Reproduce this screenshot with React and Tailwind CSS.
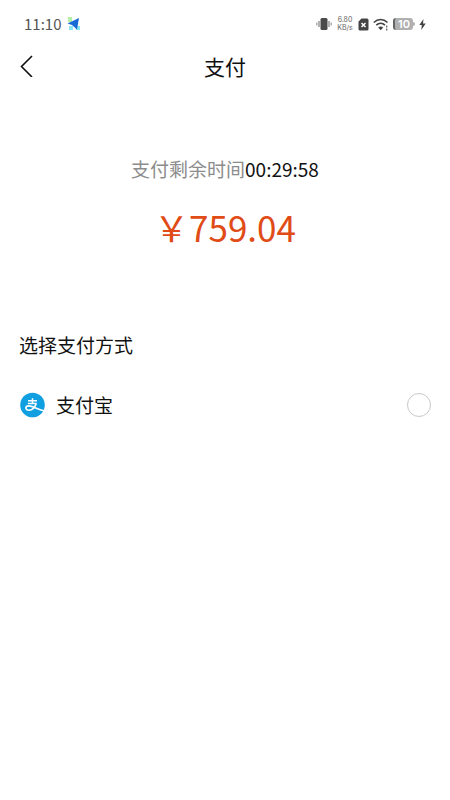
import React from "react";

function LocationArrow() {
  return (
    <svg width="14" height="14" viewBox="0 0 14 14" aria-hidden="true">
      <path d="M1 0h4v5H1z" fill="#b4efa8" />
      <path d="M2 9h4v4H2zM9 9h4v4H9z" fill="#8ce6f3" />
      <path d="M12 1 .5 6.5 5 8l5 4.500z" fill="#1769d6" />
    </svg>
  );
}

function VibrateIcon() {
  return (
    <svg width="16" height="14" viewBox="0 0 16 14" aria-hidden="true">
      <rect x="4.5" y="1" width="7" height="12" rx="1.5" fill="#4a4a4a" />
      <path d="M3 4v6M13 4v6" stroke="#888" strokeWidth="1.3" />
      <path d="M.8 5.5v3M15.2 5.5v3" stroke="#999" strokeWidth="1.2" />
    </svg>
  );
}

function SimIcon() {
  return (
    <svg width="11" height="13" viewBox="0 0 11 13" aria-hidden="true">
      <path d="M3.5.5H9A1.5 1.5 0 0 1 10.5 2v9A1.5 1.5 0 0 1 9 12.5H2A1.5 1.5 0 0 1 .5 11V3.5z" fill="#444" />
      <path d="m3.5 5 4 4m0-4-4 4" stroke="#fff" strokeWidth="1.5" />
    </svg>
  );
}

function WifiIcon() {
  return (
    <svg width="16" height="13" viewBox="0 0 16 13" fill="none" aria-hidden="true">
      <path d="M.8 4.5c4-4 9.700-4 13.700 0" stroke="#444" strokeWidth="1.6" />
      <path d="M3.3 7.2c2.600-2.500 6.100-2.500 8.700 0" stroke="#444" strokeWidth="1.6" />
      <path d="M5.200 9.600c1.500-1.500 3.500-1.500 5 0L7.700 12.200z" fill="#444" />
      <path d="M13.700 7.500v2M13.700 10.500v2" stroke="#666" strokeWidth="1.3" />
    </svg>
  );
}

function Battery() {
  return (
    <div className="flex items-center">
      <div className="flex h-3 w-5 items-center justify-center rounded-[3px] border-l-2 border-[#666] bg-[#b0b0b0] font-['Inter',sans-serif] text-[11px] leading-3 font-semibold text-white">
        10
      </div>
      <div className="h-1 w-0.5 rounded-r bg-[#b0b0b0]" />
    </div>
  );
}

function BoltIcon() {
  return (
    <svg width="7" height="11" viewBox="0 0 7 11" aria-hidden="true">
      <path d="M4.500 0 .3 6h2.500L2.300 11 6.700 4.500H4z" fill="#444" />
    </svg>
  );
}

function StatusBar() {
  return (
    <div className="flex h-12 items-center justify-between px-6 text-[#555]">
      <div className="flex items-center gap-1.5">
        <span className="text-[15px] leading-5">11:10</span>
        <LocationArrow />
      </div>
      <div className="flex items-center gap-1">
        <VibrateIcon />
        <div className="flex w-[18px] flex-col items-center font-['Inter',sans-serif] text-[7px] leading-2 text-[#666]">
          <span>6.80</span>
          <span>KB/s</span>
        </div>
        <SimIcon />
        <WifiIcon />
        <Battery />
        <BoltIcon />
      </div>
    </div>
  );
}

function AlipayLogo() {
  return (
    <svg width="26" height="26" viewBox="0 0 26 26" fill="none" aria-hidden="true">
      <circle cx="13.500" cy="13" r="12.300" fill="#109fe0" />
      <path d="M9 8.800h9M13.500 6.300v5.200M8.800 11.600h8.800" stroke="#fff" strokeWidth="1.5" />
      <path d="M17.200 11.600c-1 3.200-3.500 6.600-7.200 6.600-1.900 0-3.100-.8-3.100-2.100 0-1.400 1.300-2.200 2.900-2.200 3.700 0 8 3 15 4.800" stroke="#fff" strokeWidth="1.6" />
    </svg>
  );
}

export default function App() {
  return (
    <div className="min-h-screen bg-white font-['Noto_Sans_CJK_SC',sans-serif] text-[#111]">
      <StatusBar />
      <header className="grid h-9 grid-cols-[1fr_auto_1fr] items-center px-5">
        <button type="button" aria-label="返回" className="flex h-9 w-6 items-center">
          <svg width="13" height="22" viewBox="0 0 13 22" fill="none" aria-hidden="true">
            <path d="M12 1 1.500 11.500 12 22" stroke="#111" strokeWidth="1.6" />
          </svg>
        </button>
        <h1 className="text-[21px] leading-8">支付</h1>
      </header>
      <main>
        <section className="flex flex-col items-center pt-[71px]">
          <p className="text-[19px] leading-7">
            <span className="text-[#8c8c8c]">支付剩余时间</span>
            <time>00:29:58</time>
          </p>
          <p className="mt-5 text-[35px] leading-12 text-[#e04b16]">￥759.04</p>
        </section>
        <fieldset className="px-[19px] pt-20">
          <legend className="contents text-[19px] leading-7">选择支付方式</legend>
          <label className="mt-8 flex items-center text-[19px] leading-7">
            <AlipayLogo />
            <span className="ml-[11px] flex-1">支付宝</span>
            <input
              type="radio"
              name="payment"
              value="alipay"
              className="size-6 appearance-none rounded-full border border-[#c8c8c8] bg-white checked:border-8 checked:border-[#109fe0]"
            />
          </label>
        </fieldset>
      </main>
    </div>
  );
}
